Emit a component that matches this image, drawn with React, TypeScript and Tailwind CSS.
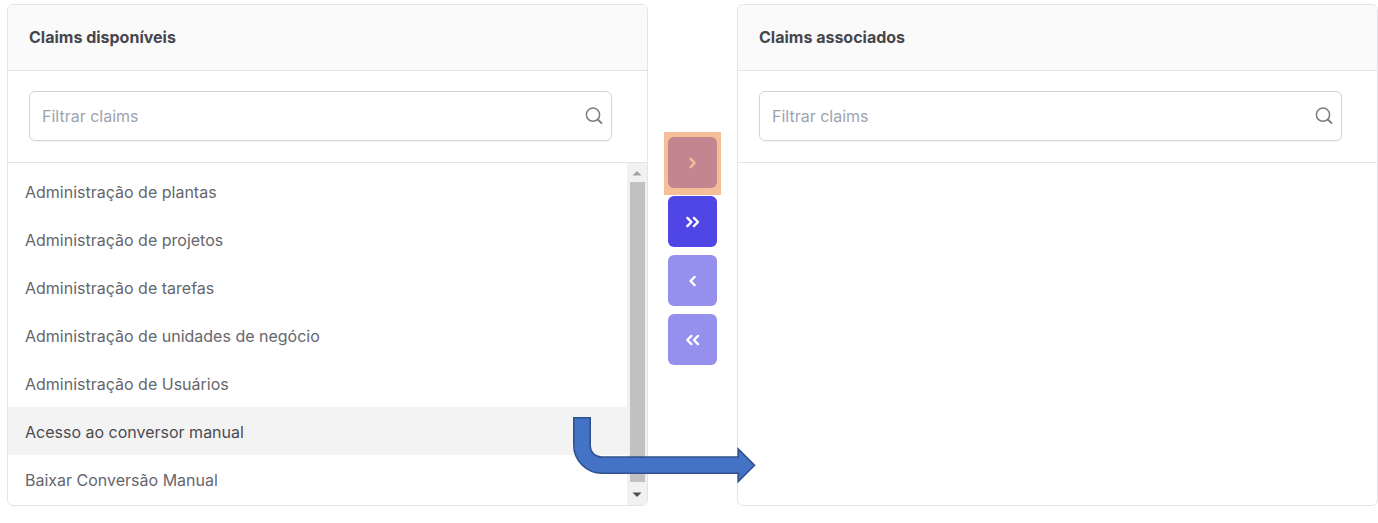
import { useState } from "react";
import type { ReactNode } from "react";

const availableClaims = [
  "Administração de plantas",
  "Administração de projetos",
  "Administração de tarefas",
  "Administração de unidades de negócio",
  "Administração de Usuários",
  "Acesso ao conversor manual",
  "Baixar Conversão Manual",
];

function SearchIcon() {
  return (
    <svg viewBox="0 0 18 18" className="size-[18px] shrink-0" fill="none" stroke="#7c7c84" strokeWidth="1.5" aria-hidden="true">
      <circle cx="8" cy="7.7" r="6.6" />
      <path d="M12.8 12.5 17 16.6" strokeWidth="1.9" />
    </svg>
  );
}

function Chevrons({ direction, double }: { direction: "left" | "right"; double?: boolean }) {
  const right = direction === "right";
  const single = right ? "M5.6 3.9 9.6 8 5.6 12.1" : "M9.6 3.9 5.6 8 9.6 12.1";
  const pair = right ? "M2.3 3.9 6.4 8 2.3 12.1M8.9 3.9 13 8 8.9 12.1" : "M6.4 3.9 2.3 8 6.4 12.1M13 3.9 8.9 8 13 12.1";
  return (
    <svg viewBox="0 0 16 16" className="size-4" fill="none" stroke="currentColor" strokeWidth="2.4" strokeLinecap="round" strokeLinejoin="round" aria-hidden="true">
      <path d={double ? pair : single} />
    </svg>
  );
}

function Panel({ id, title, children }: { id: string; title: string; children?: ReactNode }) {
  return (
    <section className="flex min-w-0 flex-1 flex-col overflow-hidden rounded-md border border-[#e4e4e7] bg-white">
      <h2 className="border-b border-[#e4e4e7] bg-[#fafafa] px-[21px] py-5 text-base leading-[25px] font-bold text-[#46464d]">{title}</h2>
      <div className="border-b border-[#e4e4e7] pt-5 pr-[35px] pb-[21px] pl-[21px]">
        <label htmlFor={id} className="flex h-[50px] items-center rounded-md border border-[#d4d4d8] pr-2 pl-3 shadow-xs">
          <input
            id={id}
            type="text"
            aria-label={title}
            placeholder="Filtrar claims"
            className="min-w-0 flex-1 bg-transparent text-base text-[#3f3f46] outline-none placeholder:text-[#9ca3af]"
          />
          <SearchIcon />
        </label>
      </div>
      <div className="flex h-[342px]">{children}</div>
    </section>
  );
}

function ScrollTrack() {
  return (
    <div className="flex w-5 flex-col items-center bg-[#f1f1f1]" aria-hidden="true">
      <svg viewBox="0 0 20 19" className="h-[19px] w-5 shrink-0">
        <path d="M5.5 12.5 10 8l4.5 4.5Z" fill="#a3a3a3" />
      </svg>
      <div className="w-[15px] flex-1 bg-[#c1c1c1]" />
      <svg viewBox="0 0 20 23" className="h-[23px] w-5 shrink-0">
        <path d="M5.5 10.5 10 15l4.5-4.5Z" fill="#505050" />
      </svg>
    </div>
  );
}

export default function App() {
  const [selected, setSelected] = useState("Acesso ao conversor manual");
  const button = "flex h-[51px] w-[49px] items-center justify-center rounded-md text-white";

  return (
    <main className="flex bg-white pt-1 pl-[7px] font-['Inter',sans-serif]">
      <Panel id="filter-available" title="Claims disponíveis">
        <ul className="min-w-0 flex-1 py-1">
          {availableClaims.map((claim) => (
            <li key={claim}>
              <button
                type="button"
                aria-pressed={claim === selected}
                onClick={() => setSelected(claim)}
                className={
                  claim === selected
                    ? "block h-12 w-full truncate bg-[#f3f3f3] px-[17px] pt-0.5 text-left text-base text-[#4b4b50]"
                    : "block h-12 w-full truncate px-[17px] pt-0.5 text-left text-base text-[#66666c]"
                }
              >
                {claim}
              </button>
            </li>
          ))}
        </ul>
        <ScrollTrack />
      </Panel>

      <div className="relative flex w-[89px] shrink-0 flex-col items-center gap-2 pt-[133px]">
        <div className="relative">
          <button type="button" aria-label="Associar" disabled className={`${button} bg-[#958fee]`}>
            <Chevrons direction="right" />
          </button>
          <span className="pointer-events-none absolute -inset-x-1 -top-[5px] -bottom-[7px] bg-[#ed7d31]/50" />
        </div>
        <button type="button" aria-label="Associar todos" className={`${button} bg-[#4f46e5]`}>
          <Chevrons direction="right" double />
        </button>
        <button type="button" aria-label="Remover" disabled className={`${button} bg-[#958fee]`}>
          <Chevrons direction="left" />
        </button>
        <button type="button" aria-label="Remover todos" disabled className={`${button} bg-[#958fee]`}>
          <Chevrons direction="left" double />
        </button>

        <svg viewBox="0 0 184 68" className="pointer-events-none absolute top-[412px] -left-[76px] z-10 h-[68px] w-[184px]" aria-hidden="true">
          <path
            d="M1.8 1.8H18.2V30A11 11 0 0 0 29.2 41H166.2V33L182.5 49.2 166.2 65.5V57.3H30A28.2 28.2 0 0 1 1.8 29.1Z"
            fill="#4472c4"
            stroke="#2f528f"
            strokeWidth="1.6"
          />
        </svg>
      </div>

      <Panel id="filter-associated" title="Claims associados" />
    </main>
  );
}
